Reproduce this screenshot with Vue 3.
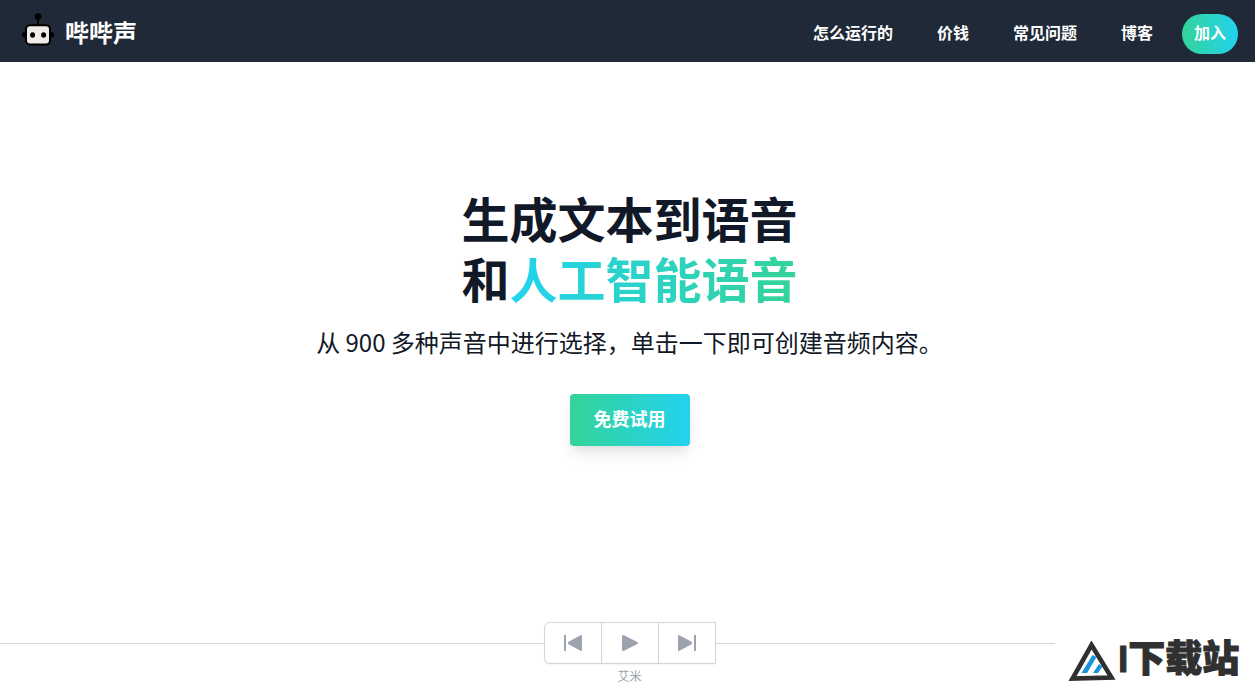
<script setup>
const links = ['怎么运行的', '价钱', '常见问题', '博客']
</script>

<template>
  <div class="page">
    <header class="bar">
      <a class="brand" href="#">
        <svg class="robot" viewBox="0 0 32 34" aria-hidden="true">
          <path d="M16 4v9" stroke="#000" stroke-width="2" />
          <circle cx="16" cy="3.500" r="3.300" fill="#000" />
          <rect x="0" y="19" width="32" height="5.500" rx="2.700" fill="#000" />
          <rect x="4" y="12.200" width="24" height="19.400" rx="4" fill="#eeebe8" stroke="#000" stroke-width="2" />
          <ellipse cx="10.600" cy="22" rx="2.500" ry="2.700" fill="#000" />
          <ellipse cx="21.600" cy="22" rx="2.500" ry="2.700" fill="#000" />
        </svg>
        <span>哔哔声</span>
      </a>
      <nav class="nav">
        <a v-for="link in links" :key="link" href="#">{{ link }}</a>
      </nav>
      <a class="join" href="#">加入</a>
    </header>

    <main class="hero">
      <h1>生成文本到语音<br />和<span class="accent">人工智能语音</span></h1>
      <p class="lead">从 900 多种声音中进行选择，单击一下即可创建音频内容。</p>
      <button class="cta" type="button">免费试用</button>
    </main>

    <footer class="footer">
      <section class="player">
        <div class="controls">
          <button type="button" aria-label="上一个">
            <svg viewBox="0 0 20 20"><path d="M1 2h2v16H1zM19 3v14q0 1.600-1.500.8L5.500 11.200Q4 10 5.500 8.800L17.500 2.200Q19 1.400 19 3z" /></svg>
          </button>
          <button type="button" aria-label="播放">
            <svg viewBox="0 0 20 20"><path d="M2 3.500Q2 1.500 4 2.300L17.300 8.900Q18.700 10 17.300 11.100L4 17.700Q2 18.500 2 16.500z" /></svg>
          </button>
          <button type="button" aria-label="下一个">
            <svg viewBox="0 0 20 20"><path d="M17 2h2v16h-2zM1 3v14q0 1.600 1.500.8L14.500 11.200Q16 10 14.500 8.800L2.500 2.200Q1 1.400 1 3z" /></svg>
          </button>
        </div>
        <span class="voice">艾米</span>
      </section>
      <div class="mark">
        <svg viewBox="0 0 48 42" aria-hidden="true">
          <path d="M23.500 6L43.500 38.500 4.500 39.500z" fill="#fff" stroke="#303030" stroke-width="4.600" stroke-linejoin="miter" />
          <path d="M24.500 16l4 2-9.500 16h-5.500z" fill="#1495dc" />
          <path d="M31 25l3.500 2.500-4.500 6.500h-5z" fill="#1495dc" />
        </svg>
        <span>I下载站</span>
      </div>
    </footer>
  </div>
</template>

<style>
body {
  background: #fff;
}
</style>

<style scoped>
.page {
  min-height: 100vh;
  display: flex;
  flex-direction: column;
  overflow: hidden;
  color: #111827;
  font-family: "Liberation Sans", "Noto Sans CJK SC", sans-serif;
}
a {
  color: inherit;
  text-decoration: none;
}
button {
  font: inherit;
  cursor: pointer;
}
.bar {
  display: flex;
  align-items: center;
  box-sizing: border-box;
  height: 62px;
  padding: 6px 17px 0 22px;
  background: #1f2937;
  color: #fff;
  font-weight: 700;
}
.brand {
  display: flex;
  align-items: center;
  gap: 11px;
  font-size: 24px;
  line-height: 32px;
}
.robot {
  width: 32px;
  height: 34px;
  margin-bottom: 8px;
}
.nav {
  display: flex;
  gap: 44px;
  margin-left: auto;
  margin-right: 29px;
  font-size: 16px;
  line-height: 24px;
}
.join {
  padding: 8px 12px;
  border-radius: 20px;
  background: linear-gradient(to right, #34d399, #22d3ee);
  font-size: 16px;
  line-height: 24px;
}
.hero {
  flex: 1;
  display: flex;
  flex-direction: column;
  align-items: center;
  padding: 130px 0 0 4px;
}
h1 {
  margin: 0;
  font-size: 48px;
  line-height: 60px;
  font-weight: 700;
}
.accent {
  background: linear-gradient(to left, #34d399, #22d3ee);
  -webkit-background-clip: text;
  background-clip: text;
  color: transparent;
}
.lead {
  margin: 12px 0 34px;
  font-family: "Noto Sans CJK SC", sans-serif;
  font-size: 24px;
  line-height: 36px;
  font-weight: 400;
}
.cta {
  padding: 12px 24px;
  border: 0;
  border-radius: 4px;
  background: linear-gradient(to right, #34d399, #22d3ee);
  box-shadow: 0 10px 15px -3px rgba(0, 0, 0, 0.1), 0 4px 6px -2px rgba(0, 0, 0, 0.05);
  color: #fff;
  font-size: 18px;
  line-height: 28px;
  font-weight: 700;
}
.footer {
  display: grid;
  grid-template-columns: 200px 1fr 200px;
  align-items: start;
}
.player {
  grid-column: 1 / 3;
  display: flex;
  flex-direction: column;
  align-items: center;
  padding-left: 204px;
  background: linear-gradient(#d1d5db, #d1d5db) 0 21px / 100% 1px no-repeat;
}
.controls {
  display: flex;
  border: 1px solid #d1d5db;
  border-radius: 6px 0 0 6px;
  background: #fff;
  box-shadow: 0 1px 2px rgba(0, 0, 0, 0.05);
}
.controls button {
  display: flex;
  padding: 10px 18px;
  border: 0;
  background: none;
}
.controls button + button {
  border-left: 1px solid #d1d5db;
}
.controls svg {
  width: 20px;
  height: 20px;
  fill: #9ca3af;
}
.voice {
  margin: 5px 0;
  color: #9ca3af;
  font-size: 12px;
  line-height: 16px;
}
.mark {
  display: flex;
  align-items: center;
  gap: 2px;
  padding: 14px 0 0 13px;
  color: #303030;
  font-size: 37px;
  line-height: 48px;
  font-weight: 900;
  white-space: nowrap;
}
.mark svg {
  flex: none;
  width: 48px;
  height: 42px;
}
.mark span {
  -webkit-text-stroke: 1px #303030;
}
</style>
